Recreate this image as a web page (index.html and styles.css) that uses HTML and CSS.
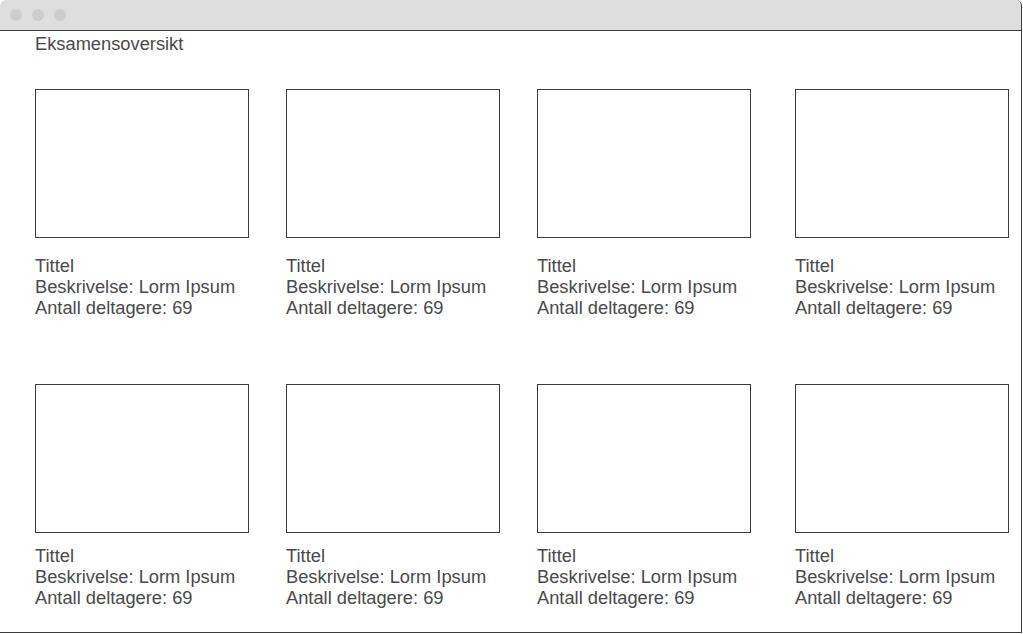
FILE: index.html
```html
<!DOCTYPE html>
<html lang="no">
<head>
<meta charset="utf-8">
<title>Eksamensoversikt</title>
<link rel="stylesheet" href="styles.css">
</head>
<body>
<div class="window">
  <div class="titlebar">
    <span class="dot"></span><span class="dot"></span><span class="dot"></span>
  </div>
  <main class="content">
    <h1 class="page-title">Eksamensoversikt</h1>
    <section class="grid row-one">
      <div class="card"><div class="thumb"></div><div class="info"><div>Tittel</div><div>Beskrivelse: Lorm Ipsum</div><div>Antall deltagere: 69</div></div></div>
      <div class="card"><div class="thumb"></div><div class="info"><div>Tittel</div><div>Beskrivelse: Lorm Ipsum</div><div>Antall deltagere: 69</div></div></div>
      <div class="card"><div class="thumb"></div><div class="info"><div>Tittel</div><div>Beskrivelse: Lorm Ipsum</div><div>Antall deltagere: 69</div></div></div>
      <div class="card"><div class="thumb"></div><div class="info"><div>Tittel</div><div>Beskrivelse: Lorm Ipsum</div><div>Antall deltagere: 69</div></div></div>
    </section>
    <section class="grid row-two">
      <div class="card"><div class="thumb"></div><div class="info"><div>Tittel</div><div>Beskrivelse: Lorm Ipsum</div><div>Antall deltagere: 69</div></div></div>
      <div class="card"><div class="thumb"></div><div class="info"><div>Tittel</div><div>Beskrivelse: Lorm Ipsum</div><div>Antall deltagere: 69</div></div></div>
      <div class="card"><div class="thumb"></div><div class="info"><div>Tittel</div><div>Beskrivelse: Lorm Ipsum</div><div>Antall deltagere: 69</div></div></div>
      <div class="card"><div class="thumb"></div><div class="info"><div>Tittel</div><div>Beskrivelse: Lorm Ipsum</div><div>Antall deltagere: 69</div></div></div>
    </section>
  </main>
</div>
</body>
</html>
```

FILE: styles.css
```css
* { box-sizing: border-box; }
html, body { margin: 0; padding: 0; background: #fff; }
body {
  font-family: "Liberation Sans", Arial, sans-serif;
  color: #4a4a4a;
  font-size: 18.3px;
  line-height: 21px;
}
.window {
  width: 1022px;
  height: 633px;
  border-right: 1px solid #3c3c3c;
  border-bottom: 1px solid #3c3c3c;
  border-top-right-radius: 6px;
  overflow: hidden;
}
.titlebar {
  height: 31px;
  background: #dedede;
  border-bottom: 1px solid #3c3c3c;
  border-radius: 6px 6px 0 0;
  display: flex;
  align-items: center;
  gap: 10px;
  padding: 0 0 0 10px;
}
.dot {
  width: 12px;
  height: 12px;
  border-radius: 50%;
  background: #cdcdcd;
}
.content {
  padding: 2px 0 0 35px;
}
.page-title {
  margin: 0;
  font-size: 18.3px;
  font-weight: normal;
  line-height: 21px;
}
.grid {
  display: grid;
  grid-template-columns: 251px 251px 258px 214px;
}
.row-one { margin-top: 35px; }
.row-two { margin-top: 66px; }
.thumb {
  width: 214px;
  height: 149px;
  border: 1px solid #3c3c3c;
}
.row-one .info { margin-top: 17px; }
.row-two .info { margin-top: 12px; }
.info div { white-space: nowrap; }
```
